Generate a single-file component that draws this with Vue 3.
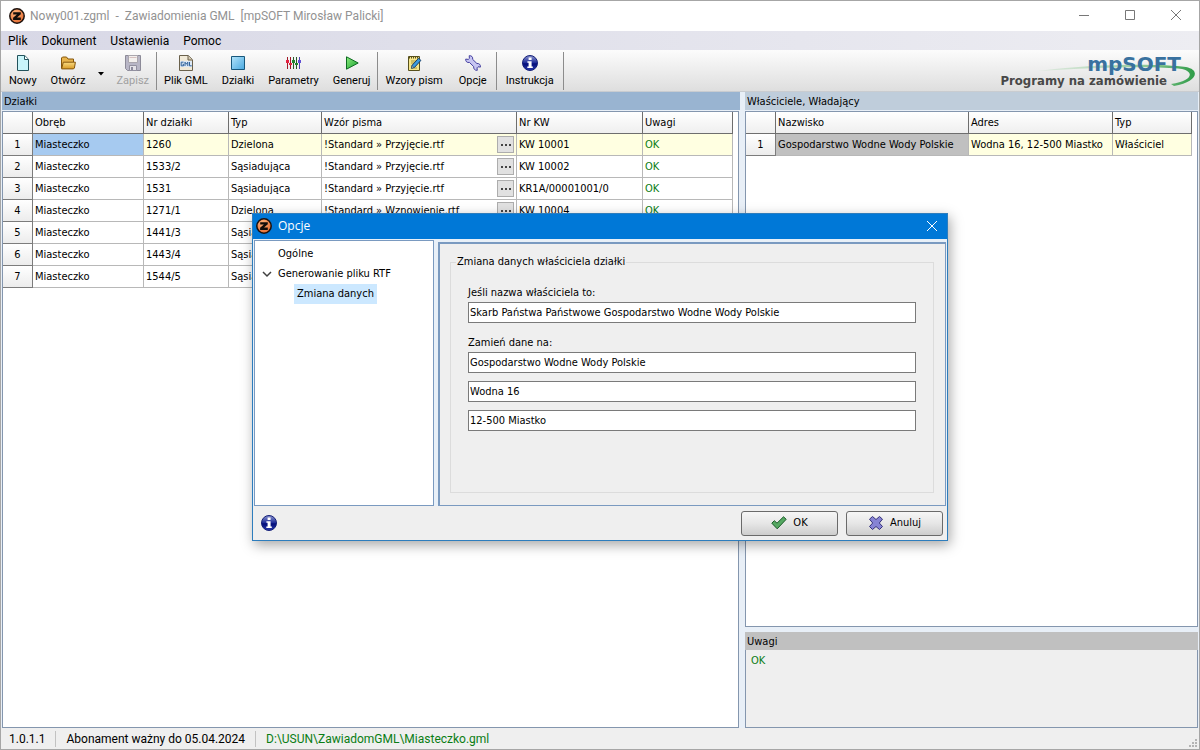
<script setup>
import { ref } from 'vue'

const parcels = ref([
  { id: 1, area: 'Miasteczko', number: '1260', type: 'Dzielona', pattern: '!Standard » Przyjęcie.rtf', kw: 'KW 10001', note: 'OK' },
  { id: 2, area: 'Miasteczko', number: '1533/2', type: 'Sąsiadująca', pattern: '!Standard » Przyjęcie.rtf', kw: 'KW 10002', note: 'OK' },
  { id: 3, area: 'Miasteczko', number: '1531', type: 'Sąsiadująca', pattern: '!Standard » Przyjęcie.rtf', kw: 'KR1A/00001001/0', note: 'OK' },
  { id: 4, area: 'Miasteczko', number: '1271/1', type: 'Dzielona', pattern: '!Standard » Wznowienie.rtf', kw: 'KW 10004', note: 'OK' },
  { id: 5, area: 'Miasteczko', number: '1441/3', type: 'Sąsiadująca', pattern: '', kw: '', note: '' },
  { id: 6, area: 'Miasteczko', number: '1443/4', type: 'Sąsiadująca', pattern: '', kw: '', note: '' },
  { id: 7, area: 'Miasteczko', number: '1544/5', type: 'Sąsiadująca', pattern: '', kw: '', note: '' },
])
const menu = ['Plik', 'Dokument', 'Ustawienia', 'Pomoc']
const ownerName = ref('Skarb Państwa Państwowe Gospodarstwo Wodne Wody Polskie')
const newName = ref('Gospodarstwo Wodne Wody Polskie')
const street = ref('Wodna 16')
const city = ref('12-500 Miastko')
</script>

<template>
  <div class="window">
    <svg class="defs" width="0" height="0" aria-hidden="true">
      <defs>
        <radialGradient id="orange" cx="0.4" cy="0.3" r="0.8"><stop offset="0" stop-color="#ffb27a" /><stop offset="1" stop-color="#e0642a" /></radialGradient>
        <linearGradient id="navy" x1="0" y1="0" x2="0" y2="1"><stop offset="0" stop-color="#8c96d0" /><stop offset="0.5" stop-color="#1c2a98" /><stop offset="0.55" stop-color="#020c78" /><stop offset="1" stop-color="#2a3cb0" /></linearGradient>
        <linearGradient id="sky" x1="0" y1="0" x2="1" y2="1"><stop offset="0" stop-color="#b4e4fa" /><stop offset="1" stop-color="#48a8e0" /></linearGradient>
        <linearGradient id="folder" x1="0" y1="0" x2="0" y2="1"><stop offset="0" stop-color="#fbdc82" /><stop offset="1" stop-color="#d79a26" /></linearGradient>
        <linearGradient id="green" x1="0" y1="0" x2="1" y2="1"><stop offset="0" stop-color="#8cec7c" /><stop offset="1" stop-color="#18a030" /></linearGradient>
        <symbol id="brand" viewBox="0 0 16 16">
          <circle cx="8" cy="8" r="7.2" fill="url(#orange)" stroke="#1b100c" stroke-width="1.5" />
          <path d="M4.2 4.2h7.6v2L8 9.6h3.8V12H4.1V9.8l3.8-3.300H4.200z" fill="#120c0a" />
        </symbol>
        <symbol id="info" viewBox="0 0 16 16">
          <circle cx="8" cy="8" r="7.5" fill="url(#navy)" stroke="#152078" />
          <path d="M6.6 2.6h3v2.3h-3zM5.4 6.2h4.2v5.2h1.2v1.7H5.3v-1.7h1.3V7.8H5.4z" fill="#fff" />
        </symbol>
      </defs>
    </svg>

    <header class="titlebar">
      <svg class="icon"><use href="#brand" /></svg>
      <h1>Nowy001.zgml&nbsp; -&nbsp; Zawiadomienia GML&nbsp; [mpSOFT Mirosław Palicki]</h1>
      <div class="caption-buttons">
        <button type="button" aria-label="Minimalizuj"><svg class="glyph" viewBox="0 0 12 12"><path d="M1 5.500h10" /></svg></button>
        <button type="button" aria-label="Maksymalizuj"><svg class="glyph" viewBox="0 0 12 12"><path d="M1.500.500h9v9h-9z" /></svg></button>
        <button type="button" aria-label="Zamknij"><svg class="glyph" viewBox="0 0 12 12"><path d="M1 0l10 10M11 0L1 10" /></svg></button>
      </div>
    </header>

    <nav class="menubar">
      <button v-for="item in menu" :key="item" type="button">{{ item }}</button>
    </nav>

    <div class="toolbar">
      <div class="tools">
        <button type="button" class="tool">
          <svg class="icon" viewBox="0 0 16 16"><path d="M2.5.5h7.2l3.8 3.8v11.2h-11z" fill="#c9f5fa" stroke="#22535c" /><path d="M9.5.8v3.7h3.8" fill="#fff" stroke="#22535c" /></svg>
          <span>Nowy</span>
        </button>
        <button type="button" class="tool">
          <svg class="icon" viewBox="0 0 16 16"><path d="M1.5 13V3l1-1h4l1.5 2h5.5v3" fill="#e8b44c" stroke="#85560c" /><path d="M3.3 7.2h12.1l-1 5.8-.9.9H1.6z" fill="url(#folder)" stroke="#85560c" /></svg>
          <span>Otwórz</span>
        </button>
        <button type="button" class="drop" aria-label="Ostatnie pliki"><svg width="6" height="4" viewBox="0 0 6 4"><path d="M0 0h6L3 3.5z" fill="#000" /></svg></button>
        <button type="button" class="tool" disabled>
          <svg class="icon" viewBox="0 0 16 16"><path d="M.5.5h15v15h-13l-2-2z" fill="#b8b6c6" stroke="#8c8a98" /><path d="M3.5.5h9v7h-9z" fill="#f3f0ee" stroke="#aaa6ae" /><path d="M4.5 10.5h7v5h-7z" fill="#e4e2e8" stroke="#9290a0" /><path d="M6 12h2v3H6z" fill="#8c8a9c" /><path d="M4.5 2.5h7" stroke="#d6c0c0" /></svg>
          <span>Zapisz</span>
        </button>
        <i class="sep"></i>
        <button type="button" class="tool">
          <svg class="icon" viewBox="0 0 16 16"><path d="M1.5.5h8.8l4.2 4.2v10.8h-13z" fill="#f1ead8" stroke="#6a614c" /><path d="M10 .8v4.2h4.2" fill="#d6cbb2" stroke="#6a614c" /><path d="M2 6h12v6H2z" fill="#dce8f5" /><path d="M5.5 7.2H3.2v3.6h2.3V9.2H4.6M7 11V7.2l1.4 2 1.4-2V11M11.5 7v3.8h2.2" fill="none" stroke="#2f6299" /></svg>
          <span>Plik GML</span>
        </button>
        <button type="button" class="tool">
          <svg class="icon" viewBox="0 0 16 16"><path d="M1.5 1.5h13v13h-13z" fill="url(#sky)" stroke="#17577c" /></svg>
          <span>Działki</span>
        </button>
        <button type="button" class="tool">
          <svg class="icon" viewBox="0 0 16 16"><path d="M2 2h1v12H2zM5 2h1v12H5z" fill="#a01828" /><path d="M8 2h1v12H8zM11 2h1v12h-1z" fill="#285c28" /><path d="M14 2h1v12h-1z" fill="#5046b0" /><path d="M1 5h3v3H1zM4 8h3v2H4z" fill="#e42040" /><path d="M7 5h3v3H7zM10 8h3v2h-3z" fill="#20852c" /><path d="M13 5h3v3h-3z" fill="#6050d4" /></svg>
          <span>Parametry</span>
        </button>
        <button type="button" class="tool">
          <svg class="icon" viewBox="0 0 16 16"><path d="M2.5 1.8v12.4L14.2 8z" fill="url(#green)" stroke="#0c6a20" stroke-linejoin="round" /></svg>
          <span>Generuj</span>
        </button>
        <i class="sep"></i>
        <button type="button" class="tool">
          <svg class="icon" viewBox="0 0 16 16"><path d="M2.5 1.5h11v14h-11z" fill="#f5e58a" stroke="#57501c" /><path d="M3 2.5h10" stroke="#57501c" stroke-dasharray="1 1" stroke-width="2" /><path d="M5 6h5M5 8h3M5 13h6" stroke="#a6963e" /><path d="M12.6 3.2l2.3 2.2-6.4 7-3 .8.7-3z" fill="#3b9ae0" stroke="#173c64" /><path d="M5.5 13.2l.6-2.5 1.8 1.8z" fill="#fff0c0" stroke="#173c64" stroke-width=".6" /></svg>
          <span>Wzory pism</span>
        </button>
        <button type="button" class="tool roomy">
          <svg class="icon" viewBox="0 0 16 16"><path d="M4.2.7l.2 2.7-1.1 1L.7 4.1C.4 6.5 2.2 8 4.4 7.400l4.300 4.200c-.4 2.100 1.200 4.100 3.600 3.700l-.3-2.500 1-1 2.400.3c.4-2.500-1.500-4-3.500-3.600L7.600 4.300C8.200 2.200 6.600.4 4.200.7z" fill="#c7c5f2" stroke="#4540a0" stroke-linejoin="round" /></svg>
          <span>Opcje</span>
        </button>
        <i class="sep"></i>
        <button type="button" class="tool roomy">
          <svg class="icon"><use href="#info" /></svg>
          <span>Instrukcja</span>
        </button>
        <i class="sep"></i>
      </div>
      <div class="logo">
        <svg class="swoosh" viewBox="0 0 170 32" aria-hidden="true">
          <defs><linearGradient id="tail" x1="0" y1="0" x2="1" y2="0"><stop offset="0" stop-color="#b9dcbc" stop-opacity="0.3" /><stop offset="0.7" stop-color="#8cc794" /><stop offset="1" stop-color="#2f9c48" /></linearGradient></defs>
          <path d="M10 15C60 8 130 7 158 11c15 3 11 15-12 19l-3-2c21-3 24-12 11-15C130 10 70 11 10 15z" fill="url(#tail)" />
        </svg>
        <strong>mpSOFT</strong>
        <span>Programy na zamówienie</span>
      </div>
    </div>

    <main class="work">
      <section class="parcels">
        <h2 class="active">Działki</h2>
        <div class="sheet">
          <table>
            <colgroup><col class="w30" /><col class="w111" /><col class="w85" /><col class="w93" /><col class="w195" /><col class="w126" /><col class="w90" /></colgroup>
            <thead>
              <tr><th></th><th>Obręb</th><th>Nr działki</th><th>Typ</th><th>Wzór pisma</th><th>Nr KW</th><th>Uwagi</th></tr>
            </thead>
            <tbody>
              <tr v-for="p in parcels" :key="p.id" :class="{ current: p.id === 1 }">
                <th scope="row">{{ p.id }}</th>
                <td :class="{ picked: p.id === 1 }">{{ p.area }}</td>
                <td>{{ p.number }}</td>
                <td>{{ p.type }}</td>
                <td class="with-button"><div><span>{{ p.pattern }}</span><button type="button" aria-label="Wybierz wzór"><i></i><i></i><i></i></button></div></td>
                <td>{{ p.kw }}</td>
                <td class="ok">{{ p.note }}</td>
              </tr>
            </tbody>
          </table>
        </div>
      </section>

      <div class="side">
        <section class="owners">
          <h2>Właściciele, Władający</h2>
          <div class="sheet">
            <table>
              <colgroup><col class="w30" /><col class="w193" /><col class="w144" /><col class="w79" /></colgroup>
              <thead><tr><th></th><th>Nazwisko</th><th>Adres</th><th>Typ</th></tr></thead>
              <tbody>
                <tr class="current"><th scope="row">1</th><td class="muted">Gospodarstwo Wodne Wody Polskie</td><td>Wodna 16, 12-500 Miastko</td><td>Właściciel</td></tr>
              </tbody>
            </table>
          </div>
        </section>
        <section class="notes">
          <h2 class="grey">Uwagi</h2>
          <p class="ok">OK</p>
        </section>
      </div>
    </main>

    <footer class="status">
      <span>1.0.1.1</span><span>Abonament ważny do 05.04.2024</span><span class="path">D:\USUN\ZawiadomGML\Miasteczko.gml</span>
      <svg class="grip" width="9" height="9" viewBox="0 0 9 9"><path d="M6 0h2v2H6zM3 3h2v2H3zM6 3h2v2H6zM0 6h2v2H0zM3 6h2v2H3zM6 6h2v2H6z" fill="#b4b4b4" /></svg>
    </footer>

    <div class="dialog" role="dialog" aria-labelledby="dialog-title">
      <header class="dialog-title">
        <svg class="icon"><use href="#brand" /></svg>
        <h2 id="dialog-title">Opcje</h2>
        <button type="button" aria-label="Zamknij"><svg class="glyph" viewBox="0 0 12 12"><path d="M1 1l10 10M11 1L1 11" /></svg></button>
      </header>
      <div class="dialog-body">
        <ul class="tree">
          <li><button type="button">Ogólne</button></li>
          <li class="branch">
            <svg class="chevron" viewBox="0 0 10 10"><path d="M1 3l4 4 4-4" /></svg>
            <button type="button">Generowanie pliku RTF</button>
          </li>
          <li class="child"><button type="button" class="selected">Zmiana danych</button></li>
        </ul>
        <div class="pane">
          <fieldset>
            <legend>Zmiana danych właściciela działki</legend>
            <label for="owner">Jeśli nazwa właściciela to:</label>
            <input id="owner" v-model="ownerName" type="text" />
            <label for="name" class="second">Zamień dane na:</label>
            <input id="name" v-model="newName" type="text" />
            <input v-model="street" type="text" aria-label="Ulica" />
            <input v-model="city" type="text" aria-label="Miejscowość" />
          </fieldset>
        </div>
      </div>
      <footer class="dialog-foot">
        <button type="button" class="help" aria-label="Pomoc"><svg class="icon"><use href="#info" /></svg></button>
        <button type="button" class="push">
          <svg class="icon" viewBox="0 0 16 16"><path d="M.8 8.2L3.3 5.7 6 8.2l6.5-6.400 2.700 2.500-9 9.500z" fill="#56a862" stroke="#175a26" stroke-linejoin="round" /></svg>
          <span>OK</span>
        </button>
        <button type="button" class="push">
          <svg class="icon" viewBox="0 0 16 16"><path d="M4.5 1.5l3.500 3 3.500-3 3 2.700L11.300 8l3.200 3.500-3 3-3.500-3-3.500 3-3-3L4.700 8 1.500 4.200z" fill="#8683d4" stroke="#36327c" stroke-linejoin="round" /></svg>
          <span>Anuluj</span>
        </button>
      </footer>
    </div>
  </div>
</template>

<style>
body { margin: 0; }
</style>

<style scoped>
* { box-sizing: border-box; }
.window {
  position: relative;
  display: flex;
  flex-direction: column;
  height: 100vh;
  border: 1px solid #a6a6a6;
  background: #e8eff7;
  color: #000;
  font: 11px/14px "DejaVu Sans Condensed", "DejaVu Sans", sans-serif;
  overflow: hidden;
}
.defs { position: absolute; }
button { margin: 0; padding: 0; border: 0; background: none; color: inherit; font: inherit; white-space: nowrap; }
h1, h2, p { margin: 0; font: inherit; }
.icon { display: block; flex: none; width: 16px; height: 16px; }
.glyph { display: block; width: 12px; height: 12px; fill: none; stroke: #777; }

.titlebar { display: flex; align-items: center; flex: none; height: 30px; padding-left: 8px; background: #fff; }
.titlebar h1 { margin-left: 5px; color: #929292; font: 12px/16px Roboto, sans-serif; }
.caption-buttons { display: flex; margin-left: auto; }
.caption-buttons button { display: flex; align-items: center; justify-content: center; width: 46px; height: 28px; }

.menubar {
  display: flex;
  gap: 14px;
  flex: none;
  height: 19px;
  padding: 2px 0 0 7px;
  background: linear-gradient(90deg, #d8d8e6, #ededf2);
  font: 12px/17px Roboto, sans-serif;
}

.toolbar {
  display: flex;
  justify-content: space-between;
  flex: none;
  height: 42px;
  border-bottom: 1px solid #c9ccd0;
  background: linear-gradient(#fcfcfc, #dedede);
  font: 11px/16px Roboto, sans-serif;
}
.tools { display: flex; padding: 2px 0 0 1px; }
.tool { display: flex; flex-direction: column; align-items: center; padding: 3px 7px 0; }
.tool.roomy { padding: 3px 9px 0; }
.tool span { margin-top: 2px; }
.tool:disabled { color: #a0a0a0; }
.drop { width: 17px; padding-top: 2px; }
.sep { width: 1px; height: 38px; background: #8c8c8c; }
.logo { position: relative; display: flex; flex-direction: column; align-items: flex-end; width: 200px; padding: 4px 18px 0 0; }
.swoosh { position: absolute; right: 1px; top: 6px; width: 170px; height: 32px; }
.logo strong { position: relative; color: #39719f; font: bold 20px/20px "DejaVu Sans", sans-serif; }
.logo span { position: relative; margin-right: 14px; color: #484848; font: bold 13px/14px "DejaVu Sans Condensed", sans-serif; white-space: nowrap; }

.work { display: flex; gap: 5px; flex: 1; min-height: 0; padding: 0 1px; }
.parcels { display: flex; flex-direction: column; flex: 738 1 0; min-width: 0; }
.side { display: flex; flex-direction: column; gap: 5px; flex: 453 1 0; min-width: 0; }
.owners { display: flex; flex-direction: column; flex: 1; min-height: 0; }
.work h2 { flex: none; height: 18px; padding: 2px 0 0 2px; line-height: 16px; background: #bfcddb; }
.work h2.active { background: #99b4d1; }
.work h2.grey { background: #c0c0c0; }
.sheet { flex: 1; min-height: 0; margin-top: 1px; border: 1px solid #8496ae; background: #fff; overflow: hidden; }
.parcels .sheet { margin-right: 1px; }
.notes { display: flex; flex-direction: column; flex: none; height: 96px; }
.notes p { flex: 1; padding: 4px 5px; border: 1px solid #8496ae; border-top: 0; background: #efefef; }
.ok { color: #0a7d14; }

table { border-collapse: separate; border-spacing: 0; table-layout: fixed; width: 0; }
th, td { height: 22px; padding: 0 0 0 2px; border: solid #b8b8b8; border-width: 0 1px 1px 0; text-align: left; font-weight: normal; white-space: nowrap; overflow: hidden; }
thead th { border-color: #6e6e6e; background: linear-gradient(#fff, #efefef); }
tbody th { padding: 0; border-color: #7c7c7c; background: linear-gradient(#fff, #ececec); text-align: center; }
.current td { background: #ffffe1; }
.current td.picked { background: #a6caf0; }
.current td.muted { background: #c0c0c0; }
.with-button div { display: flex; align-items: center; justify-content: space-between; padding-right: 2px; }
.with-button button { display: flex; align-items: center; justify-content: center; gap: 2px; width: 17px; height: 17px; border: 1px solid #adadad; background: #e1e1e1; }
.with-button i { width: 2px; height: 2px; background: #444; }
.w30 { width: 30px; }
.w79 { width: 79px; }
.w85 { width: 85px; }
.w90 { width: 90px; }
.w93 { width: 93px; }
.w111 { width: 111px; }
.w126 { width: 126px; }
.w144 { width: 144px; }
.w193 { width: 193px; }
.w195 { width: 195px; }

.status { position: relative; display: flex; align-items: center; flex: none; height: 21px; background: #efefef; font: 12px/16px Roboto, sans-serif; }
.status span { padding: 0 10px; border-left: 1px solid #c2c2c2; }
.status span:first-child { padding-left: 8px; border-left: 0; }
.status .path { color: #0a7d14; }
.grip { position: absolute; right: 1px; bottom: 1px; }

.dialog {
  position: absolute;
  top: 212px;
  left: 50%;
  display: flex;
  flex-direction: column;
  width: 696px;
  height: 328px;
  margin-left: -348px;
  border: 1px solid #2d7dbd;
  background: #efefef;
  box-shadow: 2px 4px 12px rgba(0, 0, 0, 0.35);
}
.dialog-title { display: flex; align-items: center; flex: none; height: 25px; padding: 0 9px 1px 3px; background: #0078d7; color: #fff; font: 12px/16px "Open Sans", sans-serif; }
.dialog-title h2 { flex: 1; margin-left: 6px; }
.dialog-title .glyph { stroke: #fff; }
.dialog-body { display: flex; gap: 4px; flex: 1; min-height: 0; padding: 1px 1px 0; background: #e8f0f8; }
.tree { flex: none; width: 180px; margin: 0; padding: 3px 0; border: 1px solid #7a9ac0; background: #fff; list-style: none; }
.tree li { display: flex; align-items: center; height: 20px; padding-left: 20px; }
.tree li.child { padding-left: 39px; }
.tree li.branch { padding-left: 7px; }
.tree li button { height: 20px; padding: 0 3px; }
.chevron { width: 10px; height: 10px; margin-right: 3px; fill: none; stroke: #404040; stroke-width: 1.5; }
.tree li button.selected { background: #cce8ff; }
.pane { flex: 1; margin-top: 2px; padding: 11px 11px 12px 10px; border: 1px solid #7a9ac0; border-width: 2px 1px 1px 2px; background: #efefef; }
fieldset { height: 100%; min-width: 0; margin: 0; padding: 17px 17px 0; border: 1px solid #dcdcdc; }
legend { margin-left: -12px; padding: 0 1px; }
label { display: block; margin-bottom: 2px; }
label.second { margin-top: 13px; }
input { display: block; width: 100%; height: 21px; margin: 0 0 8px; padding: 0 1px; border: 1px solid #7a7a7a; border-radius: 0; outline: 0; background: #fff; color: inherit; font: inherit; }
.dialog-foot { display: flex; align-items: center; gap: 8px; flex: none; height: 34px; padding: 0 4px 0 8px; }
.help { margin-right: auto; }
.push { display: flex; align-items: center; justify-content: center; gap: 6px; width: 97px; height: 25px; border: 1px solid #6a6a6a; border-radius: 3px; background: linear-gradient(#f6f6f6, #e6e6e6 50%, #cdcdcd); }
</style>
